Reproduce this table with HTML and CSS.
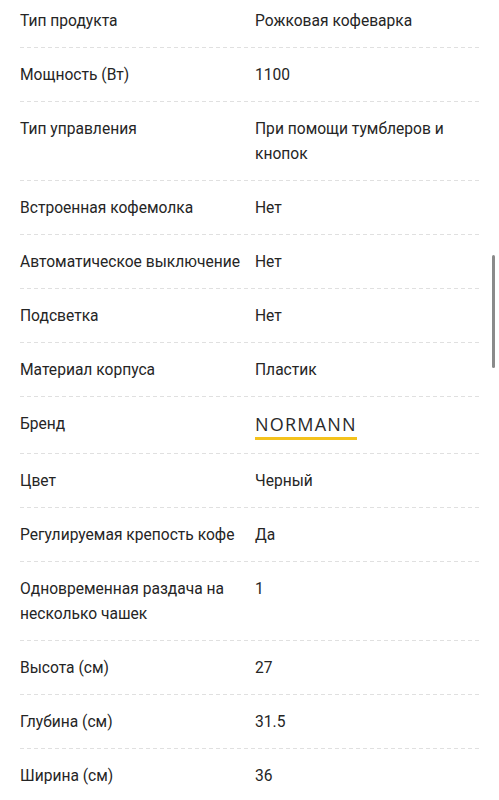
FILE: index.html
```html
<!DOCTYPE html>
<html lang="ru">
<head>
  <meta charset="UTF-8">
  <meta name="viewport" content="width=device-width, initial-scale=1.0">
  <title>Характеристики</title>
  <link rel="stylesheet" href="styles.css">
</head>
<body>
  <dl class="specs">
    <div class="row"><dt>Тип продукта</dt><dd>Рожковая кофеварка</dd></div>
    <div class="row"><dt>Мощность (Вт)</dt><dd>1100</dd></div>
    <div class="row"><dt>Тип управления</dt><dd>При помощи тумблеров и кнопок</dd></div>
    <div class="row"><dt>Встроенная кофемолка</dt><dd>Нет</dd></div>
    <div class="row"><dt>Автоматическое выключение</dt><dd>Нет</dd></div>
    <div class="row"><dt>Подсветка</dt><dd>Нет</dd></div>
    <div class="row"><dt>Материал корпуса</dt><dd>Пластик</dd></div>
    <div class="row"><dt>Бренд</dt><dd><a class="brand" href="#">NORMANN</a></dd></div>
    <div class="row"><dt>Цвет</dt><dd>Черный</dd></div>
    <div class="row"><dt>Регулируемая крепость кофе</dt><dd>Да</dd></div>
    <div class="row"><dt>Одновременная раздача на несколько чашек</dt><dd>1</dd></div>
    <div class="row"><dt>Высота (см)</dt><dd>27</dd></div>
    <div class="row"><dt>Глубина (см)</dt><dd>31.5</dd></div>
    <div class="row"><dt>Ширина (см)</dt><dd>36</dd></div>
  </dl>
  <div class="scrollbar"></div>
</body>
</html>
```

FILE: styles.css
```css
body {
  font-family: Roboto, "Noto Sans", sans-serif;
  font-size: 15.6px;
  color: #252525;
  background: #fff;
  margin: 0;
  padding: 0 20px;
  overflow: hidden;
}
.specs {
  margin: -6px 0 0;
}
.row {
  display: grid;
  grid-template-columns: 235px 1fr;
  padding: 14.5px 0;
  line-height: 25px;
  background-image: repeating-linear-gradient(to right, #e0e0e0 0 4px, transparent 4px 7px);
  background-size: 100% 1px;
  background-repeat: no-repeat;
  background-position: left bottom;
}
dt {
  padding-right: 10px;
}
dd {
  margin: 0;
}
.brand {
  display: inline-block;
  font-family: "Open Sans", sans-serif;
  font-size: 18px;
  letter-spacing: 1.2px;
  color: #2a2a2a;
  text-decoration: none;
  border-bottom: 3px solid #f4c21c;
  line-height: 25px;
}
.scrollbar {
  position: fixed;
  top: 255px;
  right: 4px;
  width: 3px;
  height: 113px;
  border-radius: 2px;
  background: #8a8a8a;
}
```
